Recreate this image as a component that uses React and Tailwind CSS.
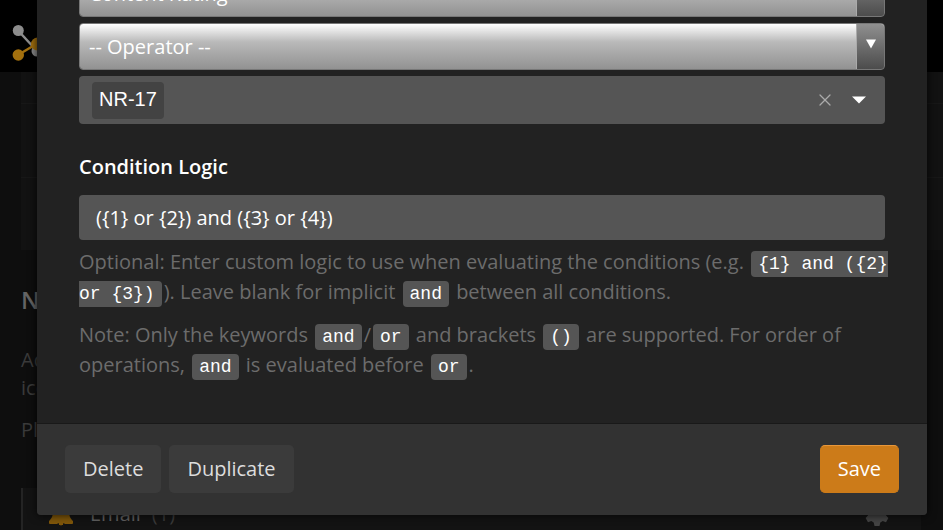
import React from 'react';
import { X } from "lucide-react";

function Code({ children }) {
  return (
    <code className="mx-[2px] rounded-[4px] bg-[#555] px-[7px] py-[3px] font-['Liberation_Mono',monospace] text-[18px] leading-5 text-white">
      {children}
    </code>
  );
}

function SelectField({ label, options }) {
  return (
    <div className="relative h-[47px] overflow-hidden rounded-[4px] border border-[#777]">
      <select
        aria-label={label}
        className="h-full w-full appearance-none bg-gradient-to-b from-white via-[#b9b9b9] via-40% to-[#929292] pr-8 pl-[9px] text-[20px] text-white outline-none"
      >
        {options.map((o) => (
          <option key={o}>{o}</option>
        ))}
      </select>
      {/* Arrow cap */}
      <span className="pointer-events-none absolute inset-y-0 right-0 flex w-7 justify-center border-l border-[#aaa] bg-gradient-to-b from-[#909090] to-[#4c4c4c] pt-[15px]">
        <svg viewBox="0 0 10 10" className="h-[10px] w-[10px]" aria-hidden="true">
          <path d="M0 0.5h10L5 9.5z" fill="#fff" />
        </svg>
      </span>
    </div>
  );
}

function Logo() {
  return (
    <svg viewBox="0 0 44 44" className="h-11 w-11" aria-hidden="true">
      <path d="M6 8.5 26 30" stroke="#8c8c8c" strokeWidth="2.500" />
      <circle cx="6.300" cy="8.500" r="5.500" fill="#8c8c8c" />
      <circle cx="25" cy="29" r="5.500" fill="#8c8c8c" />
      <path d="M6 33 26 21" stroke="#a3700e" strokeWidth="2.500" />
      <circle cx="6.300" cy="33" r="5.700" fill="#a3700e" />
      <circle cx="25.500" cy="22" r="6.500" fill="#a3700e" />
    </svg>
  );
}

function Page() {
  return (
    <div aria-hidden="true">
      <header className="flex h-[72px] items-start bg-black pt-[22px] pl-3">
        <Logo />
      </header>
      <main className="pl-[21px] text-[20px] text-[#3a3a3a]">
        <div className="h-[178px] bg-[#121212]">
          <div className="h-8 border-b border-[#171717]" />
          <div className="h-[74px] border-b border-[#171717]" />
        </div>
        <h2 className="mt-[34px] text-[24px] leading-8 font-semibold text-[#646464]">Notifications</h2>
        <p className="mt-[30px] leading-7">
          Add
          <br />
          icon
        </p>
        <p className="mt-[14px] leading-7">Please</p>
        <div className="mt-[44px] mr-[22px] flex h-14 items-center justify-between border-l-2 border-[#242424] bg-[#131313] pr-8 pb-1 pl-[26px]">
          <div className="flex items-center">
            <svg viewBox="0 0 24 26" className="h-[26px] w-6" aria-hidden="true">
              <path d="M12 0c-5 1-8 4-8 9 0 6-1 8-4 11v2c0 1 1 1 2 1h20c1 0 2 0 2-1v-2c-3-3-4-5-4-11 0-5-3-8-8-9z" fill="#80570a" />
              <path d="M9 22a3 3 0 0 0 6 0" fill="#80570a" stroke="#131313" />
            </svg>
            <span className="ml-[17px] text-[#606060]">Email</span>
            <span className="ml-[11px]">(1)</span>
          </div>
          <svg viewBox="0 0 24 24" className="h-6 w-6" aria-hidden="true">
            <path
              d="M9.500 0h5l.8 3.500 2.400 1.400L21 3.800l2.400 4.200-2.300 2.500v3l2.300 2.500-2.400 4.200-3.300-1.100-2.400 1.400-.8 3.500h-5l-.8-3.500-2.400-1.400L3 20.200.6 16l2.300-2.500v-3L.6 8 3 3.800l3.300 1.100 2.400-1.400z"
              fill="#444"
            />
          </svg>
        </div>
      </main>
    </div>
  );
}

export default function App() {
  return (
    <div className="relative h-screen overflow-hidden bg-[#0e0e0e] font-['Open_Sans',sans-serif]">
      <Page />

      <div className="absolute inset-0 flex flex-col justify-end pr-4 pb-[15px] pl-[37px]">
        <div role="dialog" aria-label="Edit condition" className="rounded-[4px] bg-[#222] shadow-[0_0_10px_rgba(0,0,0,0.8)]">
          {/* Dialog body */}
          <div className="px-[42px] pb-[43px]">
            <div className="flex flex-col gap-[6px]">
              <SelectField label="Field" options={["Content Rating"]} />
              <SelectField label="Operator" options={["-- Operator --"]} />
              <div className="flex h-12 items-center rounded-[4px] bg-[#555] pr-4 pl-[13px]">
                <span className="flex h-[37px] items-center rounded-[4px] bg-[#434343] px-[7px] pb-[3px] font-['Liberation_Sans',sans-serif] text-[20px] text-white">
                  NR-17
                </span>
                <button type="button" aria-label="Clear" className="ml-auto text-[#aaa]">
                  <X className="h-5 w-5" strokeWidth={1.5} />
                </button>
                <button type="button" aria-label="Show options" className="ml-[14px] flex w-5 justify-center">
                  <svg viewBox="0 0 14 8" className="h-2 w-[14px]" aria-hidden="true">
                    <path d="M0 .5h14L7 7.500z" fill="#fff" />
                  </svg>
                </button>
              </div>
            </div>

            <label htmlFor="logic" className="mt-[27px] block text-[20px] leading-8 font-semibold text-white">
              Condition Logic
            </label>
            <input
              id="logic"
              type="text"
              defaultValue="({1} or {2}) and ({3} or {4})"
              className="mt-3 block h-[45px] w-full rounded-[4px] bg-[#555] px-[17px] text-[20px] text-white outline-none"
            />
            <div className="-mr-1 mt-[7px] space-y-[13px] text-[20px] leading-[30px] text-[#6c6c6c]">
              <p>
                Optional: Enter custom logic to use when evaluating the conditions (e.g.{" "}
                <Code>{"{1} and ({2} or {3})"}</Code>). Leave blank for implicit <Code>and</Code> between all
                conditions.
              </p>
              <p>
                Note: Only the keywords <Code>and</Code>/<Code>or</Code> and brackets <Code>()</Code> are
                supported. For order of operations, <Code>and</Code> is evaluated before <Code>or</Code>.
              </p>
            </div>
          </div>

          {/* Dialog footer */}
          <div className="flex gap-2 rounded-b-[4px] border-t border-[#191919] bg-[#323232] px-7 pt-[21px] pb-[22px] text-[20px]">
            <button type="button" className="h-12 rounded-[5px] bg-[#3b3b3b] px-[18px] text-[#ddd]">Delete</button>
            <button type="button" className="h-12 rounded-[5px] bg-[#3b3b3b] px-[18px] text-[#ddd]">Duplicate</button>
            <button type="button" className="ml-auto h-12 rounded-[5px] border border-[#cc7b19] border-t-[#e8973a] bg-[#cc7b19] px-[17px] text-white">
              Save
            </button>
          </div>
        </div>
      </div>
    </div>
  );
}
